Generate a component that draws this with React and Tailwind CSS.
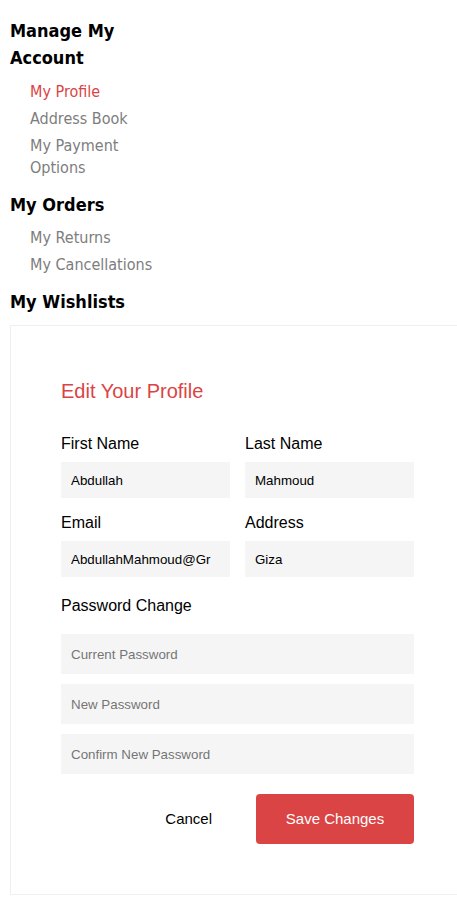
const sidebar = [
    {
        title: 'Manage My Account',
        top: 'mt-[10px]',
        links: [
            { label: 'My Profile', active: true },
            { label: 'Address Book' },
            { label: 'My Payment Options' },
        ],
    },
    {
        title: 'My Orders',
        top: 'mt-[9px]',
        links: [{ label: 'My Returns' }, { label: 'My Cancellations' }],
    },
    { title: 'My Wishlists', links: [] },
];

const Field = ({ label, value }) => (
    <div className="flex flex-col">
        <label className="text-[16px] leading-[18px] text-black mb-[9px]">{label}</label>
        <input
            readOnly
            defaultValue={value}
            className="h-9 w-full bg-[#F5F5F5] px-[10px] text-[13.33px] text-black outline-none"
        />
    </div>
);

export default function App() {
    return (
        <div className="w-full overflow-x-hidden bg-white">
            <aside className="pl-[10px] pt-[17px] w-[170px] font-['DejaVu_Sans_Condensed','DejaVu_Sans',sans-serif]">
                {sidebar.map((group) => (
                    <div key={group.title}>
                        <h2 className="text-[18px] leading-[27px] font-bold text-black">{group.title}</h2>
                        {group.links.length > 0 && (
                            <ul className={`${group.top} mb-[12px] pl-[20px] flex flex-col gap-[5px]`}>
                                {group.links.map((link) => (
                                    <li
                                        key={link.label}
                                        className={`text-[16px] leading-[22px] ${link.active ? 'text-[#DB4444]' : 'text-[#7d7d7d]'}`}
                                    >
                                        {link.label}
                                    </li>
                                ))}
                            </ul>
                        )}
                    </div>
                ))}
            </aside>

            <div className="ml-[10px] mt-[10px] w-[455px] border border-[#efefef] px-[50px] pt-[51px] pb-[50px] font-['Liberation_Sans',Arial,sans-serif]">
                <h1 className="text-[20px] leading-7 text-[#DB4444] mb-[30px]">Edit Your Profile</h1>

                <div className="grid grid-cols-2 gap-x-[15px] gap-y-4">
                    <Field label="First Name" value="Abdullah" />
                    <Field label="Last Name" value="Mahmoud" />
                    <Field label="Email" value="AbdullahMahmoud@Gr" />
                    <Field label="Address" value="Giza" />
                </div>

                <p className="mt-[20px] text-[16px] leading-[18px] text-black">Password Change</p>
                <div className="mt-[19px] flex flex-col gap-[10px]">
                    {['Current Password', 'New Password', 'Confirm New Password'].map((ph) => (
                        <input
                            key={ph}
                            type="password"
                            placeholder={ph}
                            className="h-10 w-full bg-[#F5F5F5] px-[10px] text-[13.33px] text-black placeholder:text-[#757575] outline-none"
                        />
                    ))}
                </div>

                <div className="mt-5 flex items-center justify-end gap-[44px]">
                    <button className="text-[15px] text-black">Cancel</button>
                    <button className="h-[50px] w-[158px] rounded-[4px] bg-[#DB4444] text-[15px] text-white">
                        Save Changes
                    </button>
                </div>
            </div>
        </div>
    );
}
